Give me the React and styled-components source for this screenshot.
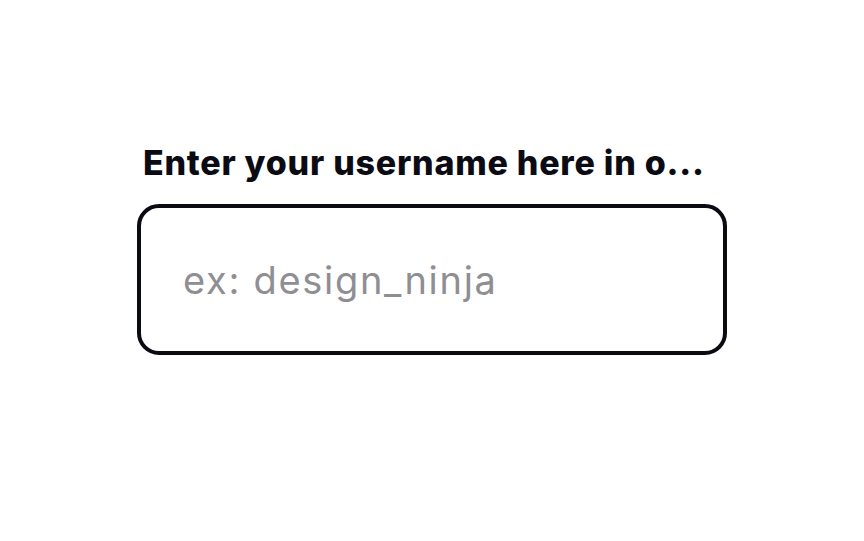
import React from "react";
import styled, { createGlobalStyle } from "styled-components";

const GlobalStyle = createGlobalStyle`
  html, body {
    margin: 0;
    padding: 0;
    background: #ffffff;
  }
  body {
    font-family: Inter, "Liberation Sans", sans-serif;
  }
`;

const Page = styled.div`
  width: 864px;
  height: 541px;
  display: flex;
  justify-content: center;
  padding-top: 141px;
  box-sizing: border-box;
`;

const Field = styled.div`
  width: 590px;
  display: flex;
  flex-direction: column;
  gap: 19px;
`;

const Label = styled.label`
  display: block;
  margin-left: 6px;
  font-size: 34px;
  line-height: 44px;
  font-weight: 800;
  color: #0b0b14;
  letter-spacing: 0.75px;
  white-space: nowrap;
`;

const Input = styled.input`
  box-sizing: border-box;
  width: 100%;
  height: 151px;
  border: 4px solid #0b0b14;
  border-radius: 22px;
  padding: 0 42px;
  font-family: Inter, "Liberation Sans", sans-serif;
  font-size: 38px;
  letter-spacing: 1.7px;
  color: #0b0b14;
  outline: none;
  background: #fff;

  &::placeholder {
    color: #8e8e93;
  }
`;

export default function App() {
  return (
    <>
      <GlobalStyle />
      <Page>
        <Field>
          <Label htmlFor="username">Enter your username here in o...</Label>
          <Input id="username" placeholder="ex: design_ninja" />
        </Field>
      </Page>
    </>
  );
}
